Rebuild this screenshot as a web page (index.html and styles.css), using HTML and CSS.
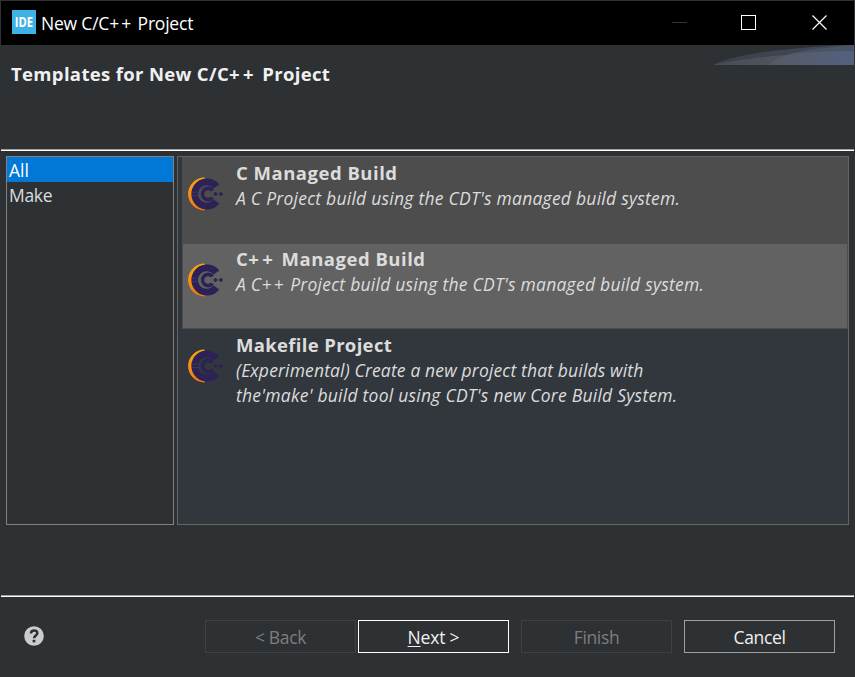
FILE: index.html
```html
<!DOCTYPE html>
<html lang="en">
<head>
<meta charset="utf-8">
<title>New C/C++ Project</title>
<link rel="stylesheet" href="styles.css">
</head>
<body>
<svg width="0" height="0" class="defs" aria-hidden="true">
  <defs>
    <linearGradient id="rim" x1="0" y1="0" x2="0" y2="1">
      <stop offset="0" stop-color="#fba70f"/>
      <stop offset="1" stop-color="#f47a12"/>
    </linearGradient>
    <symbol id="cdt" viewBox="0 0 36 34">
      <path d="M16.5 1.2A15.8 15.8 0 0 0 16.5 32.8A18 18 0 0 1 16.5 1.2Z" fill="url(#rim)" stroke="url(#rim)" stroke-width="1.2"/>
      <path d="M31.3 7.5A15.6 15.6 0 1 0 31.3 26.5L25.6 22.6A8.8 8.8 0 1 1 25.6 11.4Z" fill="#2c2255"/>
      <path d="M26 12.4A7.4 7.4 0 1 0 26 21.6L22.9 19.5A3.8 3.8 0 1 1 22.9 14.5Z" fill="#2c2255"/>
      <path d="M4 15.2H11M4 18.6H11" stroke="#55506c" stroke-width=".7" opacity=".7"/>
      <path d="M25.4 17H29.6M27.5 14.9V19.1M30.8 17H35M32.9 14.9V19.1" stroke="#2c2255" stroke-width="1.7"/>
    </symbol>
  </defs>
</svg>
<div class="window">
  <div class="titlebar">
    <span class="app-icon"><span>IDE</span></span>
    <span class="caption">New C/C<span class="pp">++</span> Project</span>
    <svg class="controls" width="160" height="20" viewBox="0 0 160 20" fill="none">
      <path d="M0 10.5H15" stroke="#333"/>
      <rect x="69.5" y="3.5" width="14" height="14" stroke="#fff"/>
      <path d="M140.5 3.5L154.5 17.5M154.5 3.5L140.5 17.5" stroke="#fff" stroke-width="1.2"/>
    </svg>
  </div>
  <header class="banner">
    <h1>Templates for New C/C<span class="pp">++</span> Project</h1>
    <svg class="swoosh" width="140" height="20" viewBox="0 0 140 20">
      <defs>
        <linearGradient id="sw" x1="0" x2="1"><stop offset="0" stop-color="#484c52"/><stop offset=".5" stop-color="#50545e"/><stop offset="1" stop-color="#4b5b7c"/></linearGradient>
        <linearGradient id="sw2" x1="0" x2="1"><stop offset="0" stop-color="#575a64"/><stop offset="1" stop-color="#53617f"/></linearGradient>
        <linearGradient id="sw3" x1="0" x2="1"><stop offset="0" stop-color="#3a4048"/><stop offset="1" stop-color="#424b5b"/></linearGradient>
      </defs>
      <path d="M-1 20C20 9 70 3 135 0H140V20Z" fill="url(#sw3)"/>
      <path d="M-1 20C30 13 70 9 140 6V20Z" fill="url(#sw)"/>
      <path d="M76 9C95 4 115 2 140 0V20H76Z" fill="#4a5465"/>
      <path d="M55 20C60 15 67 12 76 9C95 7 115 6 140 6V20Z" fill="url(#sw2)"/>
    </svg>
  </header>
  <div class="rule"></div>
  <main class="body">
    <ul class="tags">
      <li class="selected">All</li>
      <li class="make">Make</li>
    </ul>
    <div class="templates">
      <article class="card current">
        <svg class="logo"><use href="#cdt"/></svg>
        <div><h2>C Managed Build</h2><p>A C Project build using the CDT's managed build system.</p></div>
      </article>
      <article class="card hover">
        <svg class="logo"><use href="#cdt"/></svg>
        <div><h2>C<span class="pp">++</span> Managed Build</h2><p>A C<span class="pp">++</span> Project build using the CDT's managed build system.</p></div>
      </article>
      <article class="card makefile">
        <svg class="logo"><use href="#cdt"/></svg>
        <div><h2>Makefile Project</h2><p class="first">(Experimental) Create a new project that builds with</p><p>the'make' build tool using CDT's new Core Build System.</p></div>
      </article>
    </div>
  </main>
  <div class="rule"></div>
  <footer class="actions">
    <svg class="help" width="20" height="20" viewBox="0 0 20 20">
      <circle cx="10" cy="10" r="9.8" fill="#ccc"/>
      <path d="M6.9 7.5C7 3.3 13.4 3.5 13.3 7.2C13.3 9.4 10.1 9.6 10.1 12.3" fill="none" stroke="#2d3134" stroke-width="2.5"/>
      <rect x="8.6" y="13.8" width="2.8" height="2.6" fill="#2d3134"/>
    </svg>
    <button class="disabled" disabled>&lt; Back</button>
    <button class="default"><u>N</u>ext &gt;</button>
    <button class="disabled finish" disabled>Finish</button>
    <button class="cancel">Cancel</button>
  </footer>
</div>
</body>
</html>
```
FILE: styles.css
```css
* { box-sizing: border-box; margin: 0; padding: 0; }
body {
  width: 855px; height: 677px; overflow: hidden;
  background: #2d3134;
  font: 17.5px/25px "Open Sans", "Noto Sans", sans-serif;
  color: #dcdcdc;
}
.defs { position: absolute; }
.window { width: 855px; height: 677px; border: 1px solid #2f3235; display: flex; flex-direction: column; }
.titlebar { height: 44px; background: #000; display: flex; align-items: center; padding-left: 11px; flex: none; }
.app-icon {
  width: 24px; height: 24px; background: #3fb2e5; color: #fff; margin-bottom: 2px;
  font: bold 14px/23px "Open Sans", sans-serif; text-align: center; flex: none;
}
.app-icon span { display: block; width: 28px; margin-left: -2px; transform: scaleX(.8); }
.caption { color: #fff; margin-left: 5px; letter-spacing: -.2px; white-space: nowrap; }
.pp { letter-spacing: 2px; }
.controls { margin: 0 22px 2px auto; }
.banner { height: 104px; display: flex; justify-content: space-between; align-items: flex-start; flex: none; }
h1 { font-size: 18.5px; line-height: 25px; color: #f0f0f0; margin: 16px 0 0 10px; white-space: nowrap; letter-spacing: .34px; }
h2 { font-size: 18.5px; line-height: 23px; margin-bottom: 2px; white-space: nowrap; letter-spacing: .5px; }
h1 .pp, h2 .pp { letter-spacing: 3.4px; }
.rule { height: 2px; background: #fff; border-top: 1px solid #a0a0a0; flex: none; }
.body { height: 444px; padding: 5px 5px 70px; display: flex; gap: 3px; flex: none; }
.tags { width: 168px; border: 1px solid #828282; list-style: none; }
.tags li { height: 25px; line-height: 26px; padding-left: 2px; }
.tags .make { letter-spacing: -.3px; }
.tags .selected { background: #0078d7; color: #fff; }
.templates { flex: 1; border: 1px solid #646464; background: #31373d; padding-left: 4px; }
.card { height: 86px; display: flex; padding: 4px 0 0 6px; border: 0 solid #4b4d4f; }
.card.current { background: #4d4d4d; }
.card.hover { background: #626262; border-width: 1px; padding: 3px 0 0 5px; }
.card p { font-style: italic; white-space: nowrap; letter-spacing: .24px; }
.card p.first { letter-spacing: .15px; }
.card p .pp { letter-spacing: 2px; }
.makefile h2 { letter-spacing: .33px; }
.logo { width: 36px; height: 34px; margin: 16px 12px 0 0; flex: none; }
.actions { flex: 1; display: flex; align-items: flex-start; padding: 23px 0 0 23px; }
.help { margin: 6px 161px 0 0; flex: none; }
button {
  width: 151px; height: 33px; border: 1px solid #a0a0a0; background: transparent; color: #f0f0f0;
  font: inherit; line-height: 30px; flex: none; letter-spacing: -.35px; padding-top: 1px;
}
.disabled { color: #7c7e80; border-color: #3e4245; }
.default { border-color: #fff; margin: 0 12px 0 2px; letter-spacing: -.2px; }
.cancel { margin-left: 12px; }
u { text-underline-offset: 2px; }
```
